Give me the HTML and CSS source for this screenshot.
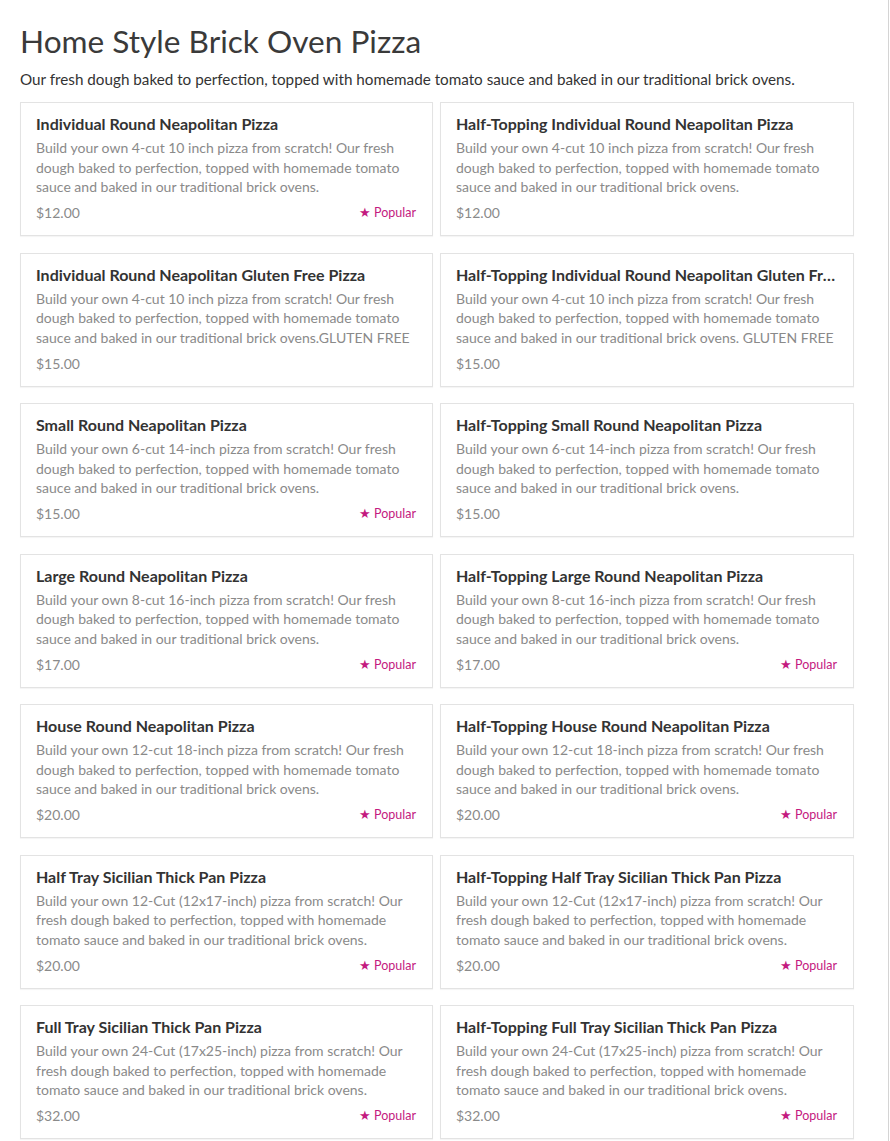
FILE: index.html
```html
<!DOCTYPE html>
<html lang="en">
<head>
<meta charset="utf-8">
<title>Home Style Brick Oven Pizza</title>
<link rel="stylesheet" href="styles.css">
</head>
<body>
<div class="page">
  <h1 class="title">Home Style Brick Oven Pizza</h1>
  <p class="subtitle">Our fresh dough baked to perfection, topped with homemade tomato sauce and baked in our traditional brick ovens.</p>
  <div class="grid">
    <div class="card">
      <div class="name">Individual Round Neapolitan Pizza</div>
      <div class="desc">Build your own 4-cut 10 inch pizza from scratch! Our fresh dough baked to perfection, topped with homemade tomato sauce and baked in our traditional brick ovens.</div>
      <div class="foot"><span class="price">$12.00</span><span class="popular">★ Popular</span></div>
    </div>
    <div class="card">
      <div class="name">Half-Topping Individual Round Neapolitan Pizza</div>
      <div class="desc">Build your own 4-cut 10 inch pizza from scratch! Our fresh dough baked to perfection, topped with homemade tomato sauce and baked in our traditional brick ovens.</div>
      <div class="foot"><span class="price">$12.00</span></div>
    </div>
    <div class="card">
      <div class="name">Individual Round Neapolitan Gluten Free Pizza</div>
      <div class="desc">Build your own 4-cut 10 inch pizza from scratch! Our fresh dough baked to perfection, topped with homemade tomato sauce and baked in our traditional brick ovens.GLUTEN FREE</div>
      <div class="foot"><span class="price">$15.00</span></div>
    </div>
    <div class="card">
      <div class="name">Half-Topping Individual Round Neapolitan Gluten Free Pizza</div>
      <div class="desc">Build your own 4-cut 10 inch pizza from scratch! Our fresh dough baked to perfection, topped with homemade tomato sauce and baked in our traditional brick ovens. GLUTEN FREE</div>
      <div class="foot"><span class="price">$15.00</span></div>
    </div>
    <div class="card">
      <div class="name">Small Round Neapolitan Pizza</div>
      <div class="desc">Build your own 6-cut 14-inch pizza from scratch! Our fresh dough baked to perfection, topped with homemade tomato sauce and baked in our traditional brick ovens.</div>
      <div class="foot"><span class="price">$15.00</span><span class="popular">★ Popular</span></div>
    </div>
    <div class="card">
      <div class="name">Half-Topping Small Round Neapolitan Pizza</div>
      <div class="desc">Build your own 6-cut 14-inch pizza from scratch! Our fresh dough baked to perfection, topped with homemade tomato sauce and baked in our traditional brick ovens.</div>
      <div class="foot"><span class="price">$15.00</span></div>
    </div>
    <div class="card">
      <div class="name">Large Round Neapolitan Pizza</div>
      <div class="desc">Build your own 8-cut 16-inch pizza from scratch! Our fresh dough baked to perfection, topped with homemade tomato sauce and baked in our traditional brick ovens.</div>
      <div class="foot"><span class="price">$17.00</span><span class="popular">★ Popular</span></div>
    </div>
    <div class="card">
      <div class="name">Half-Topping Large Round Neapolitan Pizza</div>
      <div class="desc">Build your own 8-cut 16-inch pizza from scratch! Our fresh dough baked to perfection, topped with homemade tomato sauce and baked in our traditional brick ovens.</div>
      <div class="foot"><span class="price">$17.00</span><span class="popular">★ Popular</span></div>
    </div>
    <div class="card">
      <div class="name">House Round Neapolitan Pizza</div>
      <div class="desc">Build your own 12-cut 18-inch pizza from scratch! Our fresh dough baked to perfection, topped with homemade tomato sauce and baked in our traditional brick ovens.</div>
      <div class="foot"><span class="price">$20.00</span><span class="popular">★ Popular</span></div>
    </div>
    <div class="card">
      <div class="name">Half-Topping House Round Neapolitan Pizza</div>
      <div class="desc">Build your own 12-cut 18-inch pizza from scratch! Our fresh dough baked to perfection, topped with homemade tomato sauce and baked in our traditional brick ovens.</div>
      <div class="foot"><span class="price">$20.00</span><span class="popular">★ Popular</span></div>
    </div>
    <div class="card">
      <div class="name">Half Tray Sicilian Thick Pan Pizza</div>
      <div class="desc">Build your own 12-Cut (12x17-inch) pizza from scratch! Our fresh dough baked to perfection, topped with homemade tomato sauce and baked in our traditional brick ovens.</div>
      <div class="foot"><span class="price">$20.00</span><span class="popular">★ Popular</span></div>
    </div>
    <div class="card">
      <div class="name">Half-Topping Half Tray Sicilian Thick Pan Pizza</div>
      <div class="desc">Build your own 12-Cut (12x17-inch) pizza from scratch! Our fresh dough baked to perfection, topped with homemade tomato sauce and baked in our traditional brick ovens.</div>
      <div class="foot"><span class="price">$20.00</span><span class="popular">★ Popular</span></div>
    </div>
    <div class="card">
      <div class="name">Full Tray Sicilian Thick Pan Pizza</div>
      <div class="desc">Build your own 24-Cut (17x25-inch) pizza from scratch! Our fresh dough baked to perfection, topped with homemade tomato sauce and baked in our traditional brick ovens.</div>
      <div class="foot"><span class="price">$32.00</span><span class="popular">★ Popular</span></div>
    </div>
    <div class="card">
      <div class="name">Half-Topping Full Tray Sicilian Thick Pan Pizza</div>
      <div class="desc">Build your own 24-Cut (17x25-inch) pizza from scratch! Our fresh dough baked to perfection, topped with homemade tomato sauce and baked in our traditional brick ovens.</div>
      <div class="foot"><span class="price">$32.00</span><span class="popular">★ Popular</span></div>
    </div>
  </div>
</div>
</body>
</html>
```

FILE: styles.css
```css
html, body {
  margin: 0;
  padding: 0;
  background: #fff;
}

body {
  font-family: Lato, "Liberation Sans", sans-serif;
  color: #333;
}

.page {
  width: 889px;
  min-height: 1141px;
  box-sizing: border-box;
  padding: 18px 35px 0 20px;
  border-right: 1px solid #d4d4d4;
}

.title {
  margin: 0;
  font-weight: 400;
  font-size: 31.6px;
  line-height: 46px;
  color: #3a3a3a;
}

.subtitle {
  margin: 4px 0 0;
  font-size: 15.24px;
  line-height: 22px;
  color: #333;
}

.grid {
  margin-top: 12px;
  display: grid;
  grid-template-columns: 413px 414px;
  column-gap: 7px;
  row-gap: 16.5px;
}

.card {
  border: 1px solid #e3e3e3;
  box-shadow: 0 1px 1px rgba(0, 0, 0, 0.04);
  padding: 11px 16px 12px 15px;
  min-width: 0;
}

.name {
  font-weight: 700;
  font-size: 16px;
  line-height: 20px;
  color: #333;
  white-space: nowrap;
  overflow: hidden;
  text-overflow: ellipsis;
}

.desc {
  margin-top: 4px;
  font-size: 14px;
  line-height: 19.5px;
  color: #8a8a8a;
}

.foot {
  margin-top: 6.5px;
  display: flex;
  justify-content: space-between;
  align-items: center;
  line-height: 20px;
}

.price {
  font-size: 14px;
  color: #8a8a8a;
}

.popular {
  font-size: 12.5px;
  color: #c41a7f;
}
```
